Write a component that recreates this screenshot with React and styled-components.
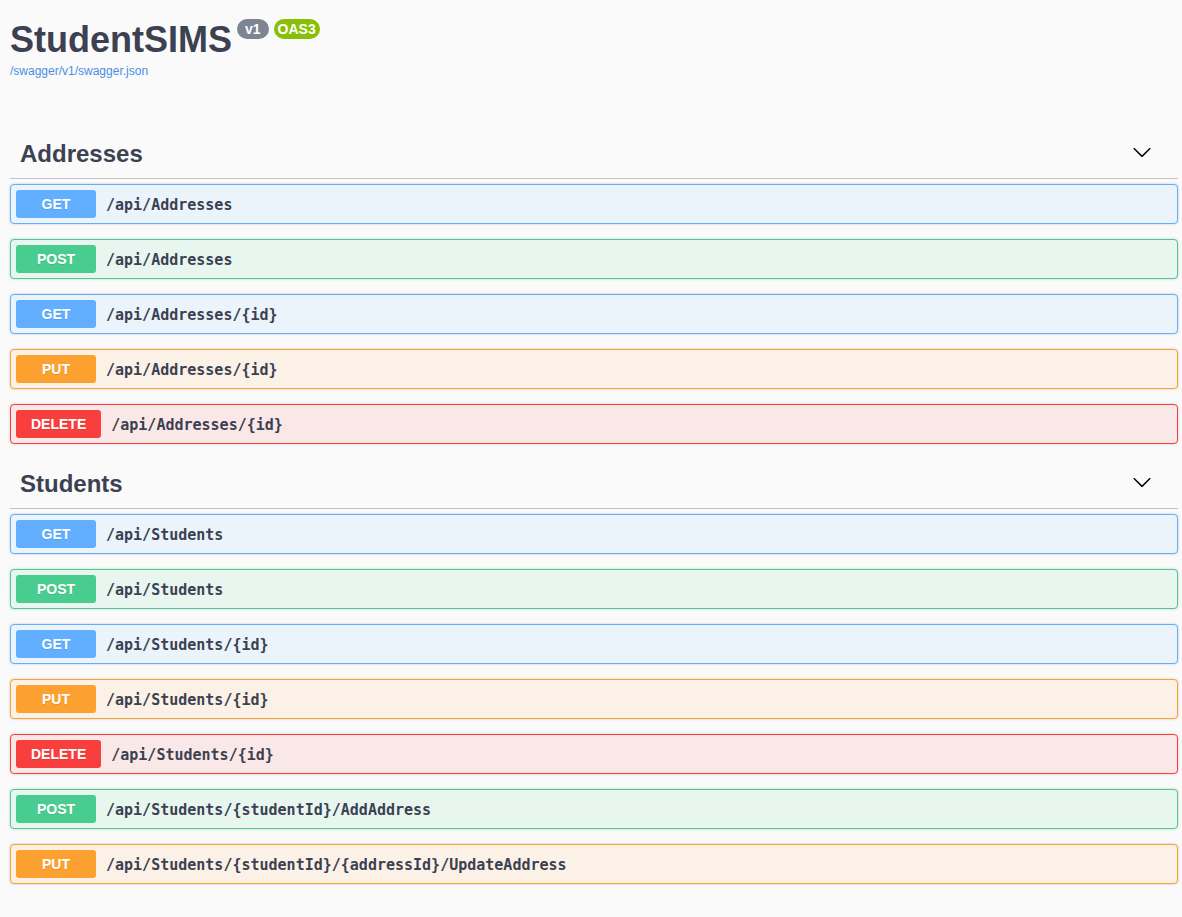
import React from "react";
import styled, { createGlobalStyle } from "styled-components";

const GlobalStyle = createGlobalStyle`
  *, *::before, *::after { box-sizing: border-box; }
  body {
    margin: 0;
    background: #fafafa;
    color: #3b4151;
    font-family: "Liberation Sans", Arial, sans-serif;
  }
`;

const METHODS = {
  GET: { color: "#61affe", tint: "#ebf3fb" },
  POST: { color: "#49cc90", tint: "#e8f6f0" },
  PUT: { color: "#fca130", tint: "#fbf1e6" },
  DELETE: { color: "#f93e3e", tint: "#fae7e7" },
};

const SECTIONS = [
  {
    name: "Addresses",
    operations: [
      ["GET", "/api/Addresses"],
      ["POST", "/api/Addresses"],
      ["GET", "/api/Addresses/{id}"],
      ["PUT", "/api/Addresses/{id}"],
      ["DELETE", "/api/Addresses/{id}"],
    ],
  },
  {
    name: "Students",
    operations: [
      ["GET", "/api/Students"],
      ["POST", "/api/Students"],
      ["GET", "/api/Students/{id}"],
      ["PUT", "/api/Students/{id}"],
      ["DELETE", "/api/Students/{id}"],
      ["POST", "/api/Students/{studentId}/AddAddress"],
      ["PUT", "/api/Students/{studentId}/{addressId}/UpdateAddress"],
    ],
  },
];

const Page = styled.main`
  padding: 19px 4px 18px 10px;
`;

const Info = styled.header`
  margin-bottom: 48px;
`;

const TitleRow = styled.div`
  display: flex;
  align-items: flex-start;
  gap: 5px;
`;

const Title = styled.h1`
  margin: 0;
  font-size: 36px;
  line-height: 42px;
`;

const Badge = styled.span`
  padding: 0 ${(p) => p.$pad}px;
  border-radius: 10px;
  background: ${(p) => p.$color};
  color: #fff;
  font-size: 14px;
  font-weight: 700;
  line-height: 20px;
`;

const SpecLink = styled.a`
  display: block;
  width: fit-content;
  color: #4990e2;
  font-size: 12px;
  line-height: 20px;
  text-decoration: none;
`;

const SectionHeader = styled.div`
  display: flex;
  align-items: center;
  justify-content: space-between;
  height: 50px;
  margin-bottom: 5px;
  padding: 0 26px 0 10px;
  border-bottom: 1px solid rgba(59, 65, 81, 0.3);
`;

const SectionTitle = styled.h2`
  margin: 0;
  font-size: 24px;
  line-height: 28px;
`;

const ToggleButton = styled.button`
  display: flex;
  padding: 0 0 4px;
  border: 0;
  background: none;
  cursor: pointer;
`;

const Operations = styled.ul`
  margin: 0;
  padding: 0;
  list-style: none;
`;

const OperationItem = styled.li`
  margin-bottom: 15px;
`;

const Operation = styled.button`
  display: flex;
  align-items: center;
  gap: 10px;
  width: 100%;
  height: 40px;
  padding: 5px;
  border: 1px solid ${(p) => p.$method.color};
  border-radius: 4px;
  background: ${(p) => p.$method.tint};
  box-shadow: 0 0 3px rgba(0, 0, 0, 0.19);
  color: #3b4151;
  text-align: left;
  cursor: pointer;
`;

const Method = styled.span`
  min-width: 80px;
  padding: 0 15px;
  border-radius: 3px;
  background: ${(p) => p.$color};
  color: #fff;
  font-family: "Liberation Sans", Arial, sans-serif;
  font-size: 14px;
  font-weight: 700;
  line-height: 28px;
  text-align: center;
  text-shadow: 0 1px 0 rgba(0, 0, 0, 0.1);
`;

const Path = styled.span`
  padding-top: 2px;
  font-family: "DejaVu Sans Mono", monospace;
  font-size: 15px;
  font-weight: 700;
  line-height: 18px;
`;

const Chevron = () => (
  <svg width="20" height="20" viewBox="0 0 20 20" aria-hidden="true">
    <path d="M17.418 6.109c.272-.268.709-.268.979 0s.271.701 0 .969l-7.908 7.83c-.27.268-.707.268-.979 0l-7.908-7.83c-.27-.268-.27-.701 0-.969.271-.268.709-.268.979 0L10 13.25l7.418-7.141z" />
  </svg>
);

export default function App() {
  return (
    <>
      <GlobalStyle />
      <Page>
        <Info>
          <TitleRow>
            <Title>StudentSIMS</Title>
            <Badge $color="#7d8492" $pad={8}>v1</Badge>
            <Badge $color="#89bf04" $pad={4}>OAS3</Badge>
          </TitleRow>
          <SpecLink href="/swagger/v1/swagger.json">/swagger/v1/swagger.json</SpecLink>
        </Info>
        {SECTIONS.map(({ name, operations }) => (
          <section key={name}>
            <SectionHeader>
              <SectionTitle>{name}</SectionTitle>
              <ToggleButton type="button" aria-label={`Collapse ${name}`}>
                <Chevron />
              </ToggleButton>
            </SectionHeader>
            <Operations>
              {operations.map(([method, path]) => (
                <OperationItem key={method + path}>
                  <Operation type="button" $method={METHODS[method]}>
                    <Method $color={METHODS[method].color}>{method}</Method>
                    <Path>{path}</Path>
                  </Operation>
                </OperationItem>
              ))}
            </Operations>
          </section>
        ))}
      </Page>
    </>
  );
}
